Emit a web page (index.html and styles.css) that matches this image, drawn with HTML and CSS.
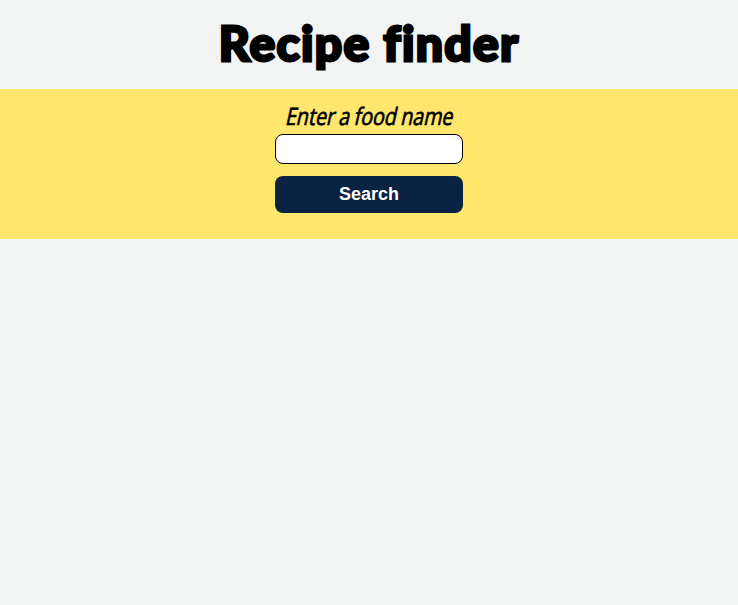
FILE: index.html
```html
<!DOCTYPE html>
<html lang="en">
<head>
<meta charset="utf-8">
<title>Recipe finder</title>
<link rel="stylesheet" href="styles.css">
</head>
<body>
<header class="header"><h1 class="title">Recipe finder</h1></header>
<form class="search">
<label class="label" for="food"><span class="label-text">Enter a food name</span></label>
<input class="input" id="food" type="text">
<button class="button" type="button">Search</button>
</form>
</body>
</html>
```
FILE: styles.css
```css
* { box-sizing: border-box; }
body { margin: 0; min-height: 100vh; background: #f1f4f3; color: #000; }
.header { height: 89px; display: flex; justify-content: center; }
.title { margin: 0; font: 900 48px/86px "Lato", sans-serif; letter-spacing: 1.3px; font-variant-ligatures: none; white-space: nowrap; -webkit-text-stroke: 2.8px #000; }
.search { height: 150px; padding-top: 11px; background: #ffe66d; display: flex; flex-direction: column; align-items: center; }
.label { height: 34px; display: flex; justify-content: center; font: 400 24px/32px "Open Sans", sans-serif; white-space: nowrap; }
.label-text { transform: translateX(1px) scaleX(.82) skewX(-15deg); word-spacing: -1px; -webkit-text-stroke: .7px #000; }
.input { width: 187.5px; height: 30px; padding: 0 8px; border: 1px solid #000; border-radius: 8px; background: #fff; }
.button { width: 187.5px; height: 37px; margin-top: 12px; padding: 0; border: 0; border-radius: 8px; background: #0a2342; color: #fff; font: bold 18px "Liberation Sans", sans-serif; }
```
